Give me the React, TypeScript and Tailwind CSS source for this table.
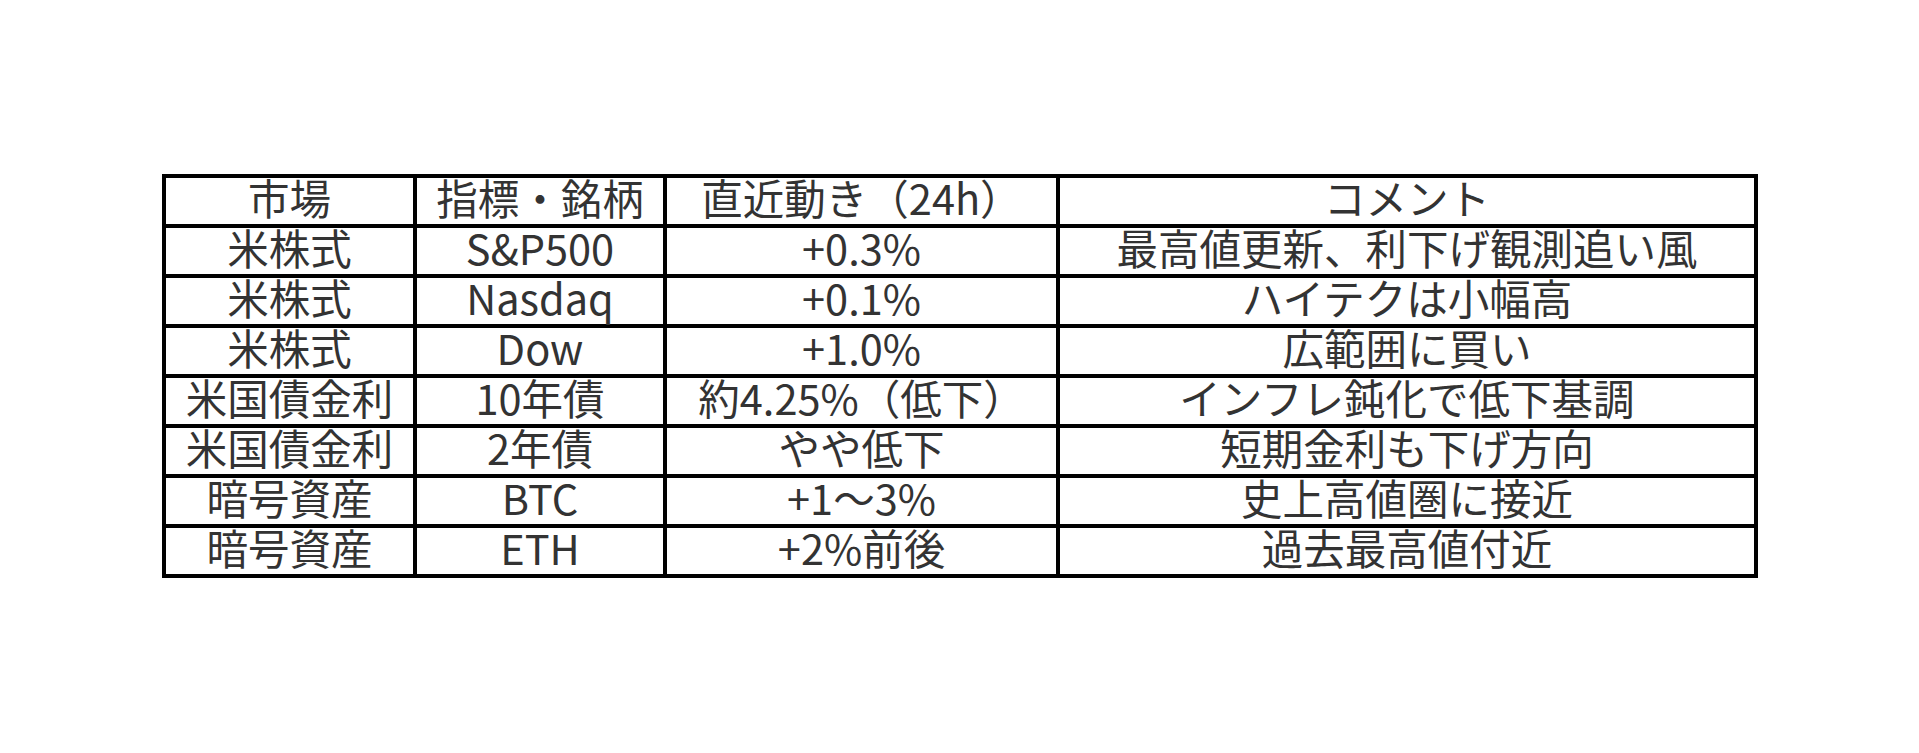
const rows = [
  ['米株式', 'S&P500', '+0.3%', '最高値更新、利下げ観測追い風'],
  ['米株式', 'Nasdaq', '+0.1%', 'ハイテクは小幅高'],
  ['米株式', 'Dow', '+1.0%', '広範囲に買い'],
  ['米国債金利', '10年債', '約4.25%（低下）', 'インフレ鈍化で低下基調'],
  ['米国債金利', '2年債', 'やや低下', '短期金利も下げ方向'],
  ['暗号資産', 'BTC', '+1〜3%', '史上高値圏に接近'],
  ['暗号資産', 'ETH', '+2%前後', '過去最高値付近'],
]

const headers = ['市場', '指標・銘柄', '直近動き（24h）', 'コメント']

export default function App() {
  return (
    <div className="w-[1919px] h-[753px] bg-white pt-[174px] pl-[162px] font-['Noto_Sans_CJK_JP',sans-serif] text-[#333]">
      <table className="border-collapse table-fixed w-[1592px]">
        <colgroup>
          <col className="w-[251px]" />
          <col className="w-[250px]" />
          <col className="w-[393px]" />
          <col className="w-[698px]" />
        </colgroup>
        <thead>
          <tr>
            {headers.map((h) => (
              <th key={h} className="border-4 border-black h-[50px] p-0 pb-[7px] text-[41.5px] leading-[39px] font-normal text-center whitespace-nowrap">
                {h}
              </th>
            ))}
          </tr>
        </thead>
        <tbody>
          {rows.map((r, i) => (
            <tr key={i}>
              {r.map((c, j) => (
                <td key={j} className="border-4 border-black h-[50px] p-0 pb-[7px] text-[41.5px] leading-[39px] text-center whitespace-nowrap">
                  {c}
                </td>
              ))}
            </tr>
          ))}
        </tbody>
      </table>
    </div>
  )
}
